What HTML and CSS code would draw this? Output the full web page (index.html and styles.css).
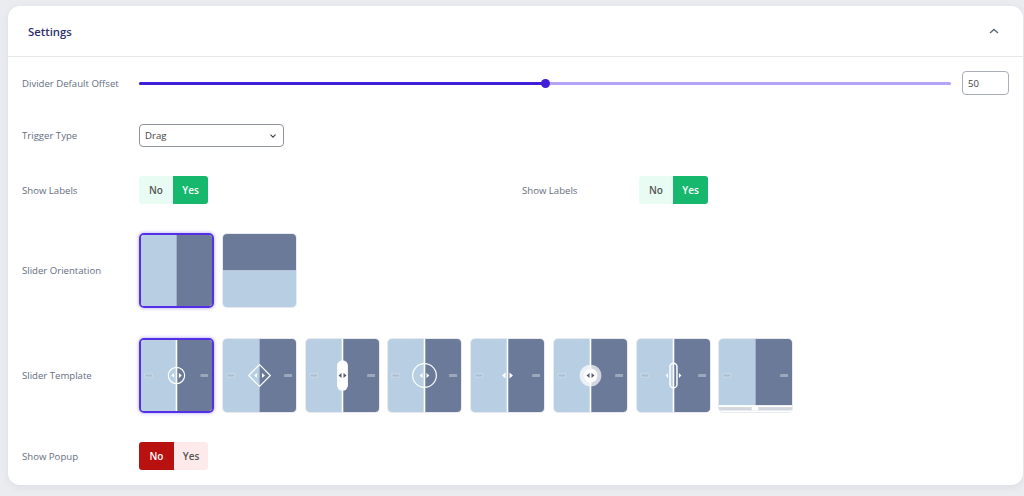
FILE: index.html
```html
<!DOCTYPE html>
<html lang="en">
<head>
    <meta charset="UTF-8">
    <meta name="viewport" content="width=device-width, initial-scale=1.0">
    <title>Settings</title>
    <link rel="stylesheet" href="styles.css">
</head>
<body>
    <div class="card">
        <div class="card-header">
            <h2>Settings</h2>
            <svg class="chevron-up" width="10" height="6" viewBox="0 0 10 6"><path d="M1 5 L5 1.4 L9 5"/></svg>
        </div>

        <div class="card-body">
            <div class="row">
                <div class="label">Divider Default Offset</div>
                <div class="slider">
                    <div class="slider-fill"></div>
                    <div class="slider-thumb"></div>
                </div>
                <input class="number-input" type="text" value="50">
            </div>

            <div class="row">
                <div class="label">Trigger Type</div>
                <div class="select">
                    <span>Drag</span>
                    <svg width="6" height="4" viewBox="0 0 6 4"><path d="M0.5 0.7 L3 3.2 L5.5 0.7"/></svg>
                </div>
            </div>

            <div class="row row-split">
                <div class="half">
                    <div class="label">Show Labels</div>
                    <div class="toggle">
                        <span class="toggle-off green">No</span>
                        <span class="toggle-on green">Yes</span>
                    </div>
                </div>
                <div class="half">
                    <div class="label">Show Labels</div>
                    <div class="toggle">
                        <span class="toggle-off green">No</span>
                        <span class="toggle-on green">Yes</span>
                    </div>
                </div>
            </div>

            <div class="row">
                <div class="label">Slider Orientation</div>
                <div class="thumbs">
                    <div class="thumb selected">
                        <svg viewBox="0 0 74 74"><rect class="light" width="37" height="74"/><rect class="dark" x="37" width="37" height="74"/></svg>
                    </div>
                    <div class="thumb">
                        <svg viewBox="0 0 74 74"><rect class="dark" width="74" height="37"/><rect class="light" y="37" width="74" height="37"/></svg>
                    </div>
                </div>
            </div>

            <div class="row row-templates">
                <div class="label">Slider Template</div>
                <div class="thumbs">
                    <div class="thumb selected">
                        <svg viewBox="0 0 74 74">
                            <rect class="light" width="37" height="74"/><rect class="dark" x="37" width="37" height="74"/>
                            <rect class="tag" x="4" y="35.5" width="8" height="3"/><rect class="tag-r" x="62" y="35.5" width="8" height="3"/>
                            <rect class="line" x="36.2" width="1.6" height="74"/>
                            <circle class="ring" cx="37" cy="37" r="8.5"/>
                            <path class="arrow" d="M34.5 34.5 V39.5 L31.5 37 Z M39.5 34.5 V39.5 L42.5 37 Z"/>
                        </svg>
                    </div>
                    <div class="thumb">
                        <svg viewBox="0 0 74 74">
                            <rect class="light" width="37" height="74"/><rect class="dark" x="37" width="37" height="74"/>
                            <rect class="tag" x="4" y="35.5" width="8" height="3"/><rect class="tag-r" x="62" y="35.5" width="8" height="3"/>
                            <path class="ring" d="M37 26 L48 37 L37 48 L26 37 Z"/>
                            <path class="arrow" d="M34.5 34.5 V39.5 L31.5 37 Z M39.5 34.5 V39.5 L42.5 37 Z"/>
                        </svg>
                    </div>
                    <div class="thumb">
                        <svg viewBox="0 0 74 74">
                            <rect class="light" width="37" height="74"/><rect class="dark" x="37" width="37" height="74"/>
                            <rect class="tag" x="4" y="35.5" width="8" height="3"/><rect class="tag-r" x="62" y="35.5" width="8" height="3"/>
                            <rect class="line" x="36.2" width="1.6" height="74"/>
                            <rect class="pill" x="31.5" y="21.5" width="11" height="31" rx="5.5"/>
                            <path class="arrow-dark" d="M36 34.5 V39.5 L33 37 Z M38 34.5 V39.5 L41 37 Z"/>
                        </svg>
                    </div>
                    <div class="thumb">
                        <svg viewBox="0 0 74 74">
                            <rect class="light" width="37" height="74"/><rect class="dark" x="37" width="37" height="74"/>
                            <rect class="tag" x="4" y="35.5" width="8" height="3"/><rect class="tag-r" x="62" y="35.5" width="8" height="3"/>
                            <rect class="line" x="36.2" width="1.6" height="74"/>
                            <circle class="ring" cx="37" cy="37" r="12"/>
                            <path class="arrow" d="M35 34.5 V39.5 L32 37 Z M39 34.5 V39.5 L42 37 Z"/>
                        </svg>
                    </div>
                    <div class="thumb">
                        <svg viewBox="0 0 74 74">
                            <rect class="light" width="37" height="74"/><rect class="dark" x="37" width="37" height="74"/>
                            <rect class="tag" x="4" y="35.5" width="8" height="3"/><rect class="tag-r" x="62" y="35.5" width="8" height="3"/>
                            <rect class="line" x="36.2" width="1.6" height="74"/>
                            <path class="arrow" d="M35 34 V40 L31.5 37 Z M39 34 V40 L42.5 37 Z"/>
                        </svg>
                    </div>
                    <div class="thumb">
                        <svg viewBox="0 0 74 74">
                            <rect class="light" width="37" height="74"/><rect class="dark" x="37" width="37" height="74"/>
                            <rect class="tag" x="4" y="35.5" width="8" height="3"/><rect class="tag-r" x="62" y="35.5" width="8" height="3"/>
                            <rect class="line" x="36.2" width="1.6" height="74"/>
                            <circle class="halo" cx="37" cy="37" r="11"/>
                            <circle class="knob" cx="37" cy="37" r="7"/>
                            <path class="arrow-dark" d="M36 34.5 V39.5 L33 37 Z M38 34.5 V39.5 L41 37 Z"/>
                        </svg>
                    </div>
                    <div class="thumb">
                        <svg viewBox="0 0 74 74">
                            <rect class="light" width="37" height="74"/><rect class="dark" x="37" width="37" height="74"/>
                            <rect class="tag" x="4" y="35.5" width="8" height="3"/><rect class="tag-r" x="62" y="35.5" width="8" height="3"/>
                            <rect class="line" x="36.2" width="1.6" height="74"/>
                            <rect class="ring thick" x="33.5" y="24.5" width="7" height="25" rx="3.5"/>
                            <path class="arrow" d="M31.5 34.5 V39.5 L29 37 Z M42.5 34.5 V39.5 L45 37 Z"/>
                        </svg>
                    </div>
                    <div class="thumb">
                        <svg viewBox="0 0 74 74">
                            <rect class="white" width="74" height="74"/>
                            <rect class="light" width="37" height="67"/><rect class="dark" x="37" width="37" height="67"/>
                            <rect class="tag" x="4" y="35.5" width="8" height="3"/><rect class="tag-r" x="62" y="35.5" width="8" height="3"/>
                            <rect class="track" y="69" width="74" height="3.5"/>
                            <rect class="white" x="33" y="68.5" width="7" height="4" rx="1.5"/>
                        </svg>
                    </div>
                </div>
            </div>

            <div class="row">
                <div class="label">Show Popup</div>
                <div class="toggle">
                    <span class="toggle-on red">No</span>
                    <span class="toggle-off red">Yes</span>
                </div>
            </div>
        </div>
    </div>
</body>
</html>
```

FILE: styles.css
```css
body {
    font-family: "Open Sans", "Liberation Sans", sans-serif;
    margin: 0;
    padding: 6px 1px 0 8px;
    height: 496px;
    box-sizing: border-box;
    overflow: hidden;
    background-color: #ebecf0;
}
.card {
    background-color: #fff;
    border-radius: 12px;
    box-shadow: 0 2px 8px rgba(60, 70, 100, 0.08);
}
.card-header {
    display: flex;
    justify-content: space-between;
    align-items: center;
    height: 50px;
    padding: 0 24px 0 20px;
    border-bottom: 1px solid #e5e7eb;
}
.card-header h2 {
    margin: 0;
    font-size: 11.3px;
    font-weight: 600;
    color: #2b2f6c;
}
.chevron-up path {
    fill: none;
    stroke: #5a6478;
    stroke-width: 1.3;
}
.card-body {
    display: flex;
    flex-direction: column;
    gap: 29px;
    padding: 14px 14px 15px 14px;
}
.row {
    display: flex;
    align-items: center;
}
.row-templates {
    margin-top: 1px;
}
.label {
    width: 117px;
    flex-shrink: 0;
    font-size: 9.6px;
    color: #656e80;
}
.row-split .half {
    display: flex;
    align-items: center;
    flex-shrink: 0;
    width: 500px;
}
.slider {
    position: relative;
    flex: 1;
    height: 3px;
    border-radius: 2px;
    background-color: #b3a4f7;
}
.slider-fill {
    width: 50%;
    height: 100%;
    border-radius: 2px;
    background-color: #3f1fd8;
}
.slider-thumb {
    position: absolute;
    left: 50%;
    top: -3px;
    width: 9px;
    height: 9px;
    margin-left: -4px;
    border-radius: 50%;
    background-color: #3f1fd8;
}
.number-input {
    width: 47px;
    height: 24px;
    box-sizing: border-box;
    margin-left: 11px;
    padding: 0 5px;
    border: 1px solid #a9adb5;
    border-radius: 4px;
    font-family: inherit;
    font-size: 9.6px;
    color: #444;
}
.select {
    display: flex;
    justify-content: space-between;
    align-items: center;
    width: 145px;
    height: 23px;
    box-sizing: border-box;
    padding: 0 7px 0 5px;
    border: 1px solid #8f939b;
    border-radius: 4px;
    font-size: 9.6px;
    color: #444;
}
.select path {
    fill: none;
    stroke: #444;
    stroke-width: 1.1;
}
.toggle {
    display: flex;
    height: 28px;
    border-radius: 3px;
    overflow: hidden;
    font-size: 10px;
    font-weight: 600;
    line-height: 28px;
    text-align: center;
}
.toggle-off, .toggle-on {
    width: 34px;
}
.toggle-on {
    width: 35px;
    color: #fff;
}
.toggle-off.green {
    background-color: #e9fcf3;
    color: #555;
}
.toggle-on.green {
    background-color: #15b86c;
}
.toggle-off.red {
    background-color: #feeaea;
    color: #555;
}
.toggle-on.red {
    background-color: #b91010;
}
.thumbs {
    display: flex;
    gap: 7.75px;
}
.thumb {
    width: 75px;
    height: 75px;
    box-sizing: border-box;
    border: 1px solid #e6e9f0;
    border-radius: 5px;
    overflow: hidden;
}
.thumb.selected {
    border: 2px solid #5330e6;
    box-shadow: 0 0 3px 1px rgba(90, 60, 230, 0.3);
}
.thumb svg {
    display: block;
    width: 100%;
    height: 100%;
}
.light { fill: #b8cfe3; }
.dark { fill: #6b7a99; }
.white { fill: #fff; }
.track { fill: #d3d7de; }
.line { fill: #fff; }
.tag {
    fill: rgba(130, 140, 160, 0.25);
    stroke: rgba(255, 255, 255, 0.55);
    stroke-width: 0.6;
}
.tag-r {
    fill: rgba(255, 255, 255, 0.35);
}
.ring {
    fill: none;
    stroke: #fff;
    stroke-width: 1.2;
}
.ring.thick {
    stroke-width: 1.5;
}
.arrow { fill: #fff; }
.arrow-dark { fill: #555c6b; }
.pill, .knob { fill: #fff; }
.halo { fill: rgba(255, 255, 255, 0.7); }
```
